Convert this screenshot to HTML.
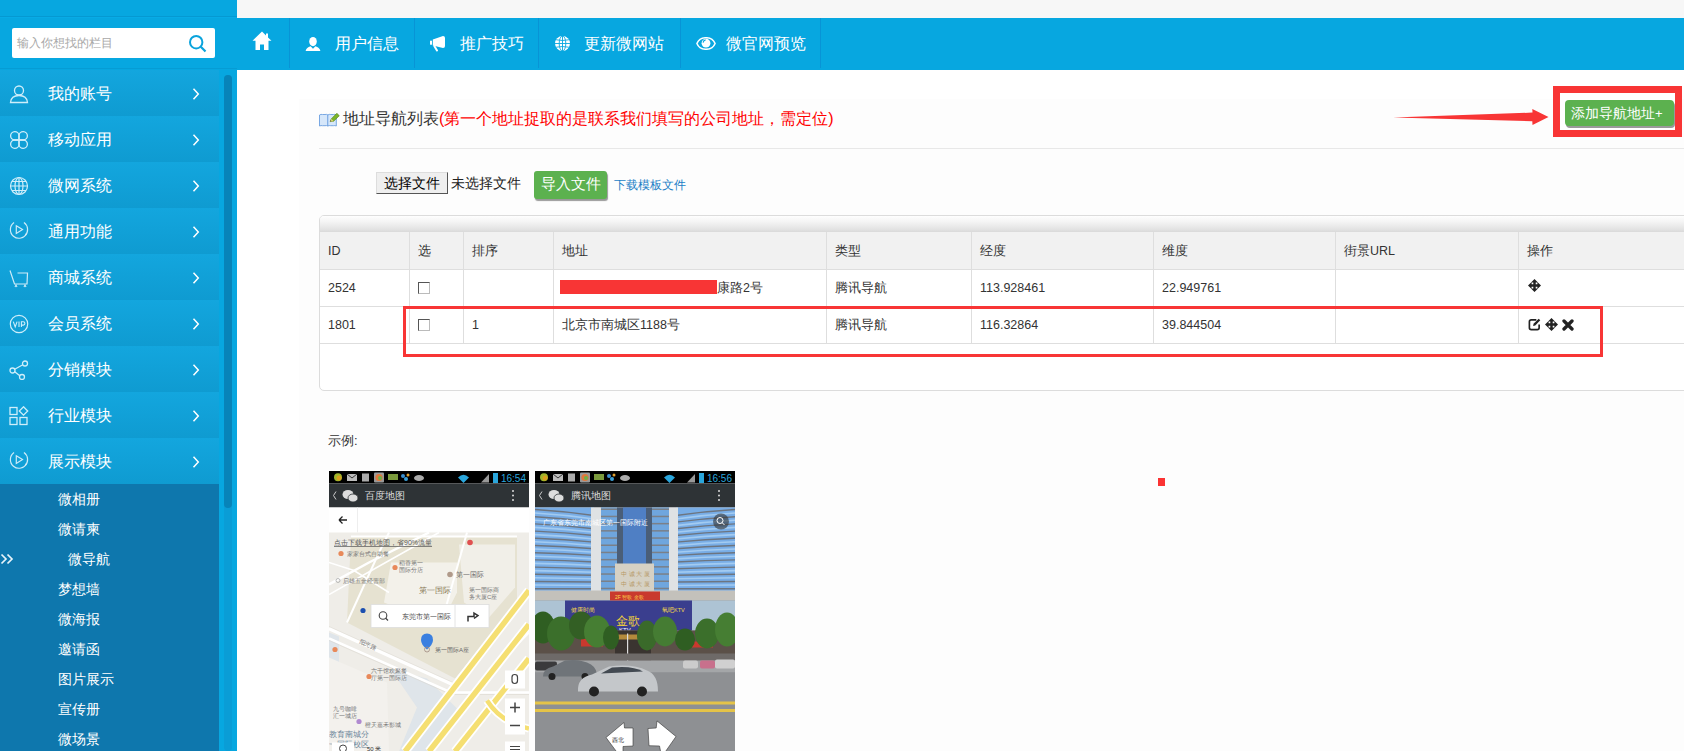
<!DOCTYPE html>
<html><head><meta charset="utf-8">
<style>
*{margin:0;padding:0;box-sizing:border-box}
html,body{width:1684px;height:751px;overflow:hidden;background:#fff;font-family:"Liberation Sans",sans-serif;color:#333}
.a{position:absolute}
#side{left:0;top:0;width:237px;height:751px;background:#07a7e0;overflow:hidden}
.mi{position:absolute;left:0;width:219px;height:46px;background:linear-gradient(#13a6de,#0f9bd1);color:#fff;font-size:16px}
.mi .t{position:absolute;left:48px;top:14px;font-weight:300;line-height:20px;white-space:nowrap}
.mi .ar{position:absolute;left:192px;top:18px;line-height:0}
.mi .ic{position:absolute;left:9px;top:14px}
#sub{left:0;top:484px;width:219px;height:267px;background:#0e77ad}
.si{position:absolute;left:58px;color:#fff;font-size:14px;line-height:18px;white-space:nowrap}
#nav{left:237px;top:18px;width:1447px;height:52px;background:#07a7e0}
.nsep{position:absolute;top:0;width:1px;height:50px;background:#0894d6}
.nt{position:absolute;top:16px;color:#fff;font-size:16px;line-height:20px;white-space:nowrap}
.tc{font-size:12.5px;line-height:15px;color:#333;white-space:nowrap}
</style></head><body>
<!-- sidebar -->
<div id="side" class="a">
  <div class="a" style="left:0;top:16px;width:237px;height:1px;background:#0599d2"></div><div class="a" style="left:0;top:17px;width:237px;height:1px;background:#08abe6"></div>
  <div class="a" style="left:0;top:68px;width:237px;height:1px;background:#069cd4"></div>
  <div class="a" style="left:12px;top:28px;width:203px;height:30px;background:#fff;border-radius:2px"></div>
  <div class="a" style="left:17px;top:35px;font-size:12px;line-height:16px;color:#a8a8a8;white-space:nowrap">输入你想找的栏目</div>
  <div class="a" style="left:188px;top:34px;line-height:0"><svg width="20" height="20" viewBox="0 0 20 20" fill="none" stroke="#0aa3dc" stroke-width="2"><circle cx="8.2" cy="8.2" r="6.2"/><path d="M12.8 12.8 L17.5 17.5" stroke-width="2.2"/></svg></div>
  <div class="mi" style="top:70px"><div class="ic"><svg width="20" height="20" viewBox="0 0 20 20" fill="none" stroke="#cfeefa" stroke-width="1.3"><circle cx="10" cy="6.5" r="4.5"/><path d="M1.5 18.5 C2 13 6 11.5 10 11.5 C14 11.5 18 13 18.5 18.5 Z"/></svg></div><div class="t">我的账号</div><div class="ar"><svg width="8" height="12" viewBox="0 0 8 12"><path d="M1.5 0.8 L6.3 6 L1.5 11.2" fill="none" stroke="#fff" stroke-width="1.5"/></svg></div></div>
  <div class="mi" style="top:116px"><div class="ic"><svg width="20" height="20" viewBox="0 0 20 20" fill="none" stroke="#cfeefa" stroke-width="1.3"><path d="M10 10 H5.5 A4.2 4.2 0 1 1 10 5.5 Z"/><path d="M10 10 V5.5 A4.2 4.2 0 1 1 14.5 10 Z"/><path d="M10 10 H14.5 A4.2 4.2 0 1 1 10 14.5 Z"/><path d="M10 10 V14.5 A4.2 4.2 0 1 1 5.5 10 Z"/></svg></div><div class="t">移动应用</div><div class="ar"><svg width="8" height="12" viewBox="0 0 8 12"><path d="M1.5 0.8 L6.3 6 L1.5 11.2" fill="none" stroke="#fff" stroke-width="1.5"/></svg></div></div>
  <div class="mi" style="top:162px"><div class="ic"><svg width="20" height="20" viewBox="0 0 20 20" fill="none" stroke="#cfeefa" stroke-width="1.2"><circle cx="10" cy="10" r="8.5"/><ellipse cx="10" cy="10" rx="4" ry="8.5"/><path d="M10 1.5V18.5M1.5 10H18.5M3 5.5H17M3 14.5H17"/></svg></div><div class="t">微网系统</div><div class="ar"><svg width="8" height="12" viewBox="0 0 8 12"><path d="M1.5 0.8 L6.3 6 L1.5 11.2" fill="none" stroke="#fff" stroke-width="1.5"/></svg></div></div>
  <div class="mi" style="top:208px"><div class="ic"><svg width="20" height="20" viewBox="0 0 20 20" fill="none" stroke="#cdebf8" stroke-width="1.2"><path d="M5.07 0.56 A8.6 8.6 0 1 0 17.79 11.23"/><path d="M16.08 13.68 A8.6 8.6 0 0 0 14.93 0.56"/><path d="M7.3 3.8 L13.5 7.6 L7.3 11.4 Z"/></svg></div><div class="t">通用功能</div><div class="ar"><svg width="8" height="12" viewBox="0 0 8 12"><path d="M1.5 0.8 L6.3 6 L1.5 11.2" fill="none" stroke="#fff" stroke-width="1.5"/></svg></div></div>
  <div class="mi" style="top:254px"><div class="ic"><svg width="20" height="20" viewBox="0 0 20 20" fill="none" stroke="#cdebf8" stroke-width="1.2"><path d="M1 2.5 L5.5 16 H18 L18.5 5 H8.5"/><path d="M6 19 L7 17 L8 19 M15 19 L16 17 L17 19" stroke-width="1.1"/></svg></div><div class="t">商城系统</div><div class="ar"><svg width="8" height="12" viewBox="0 0 8 12"><path d="M1.5 0.8 L6.3 6 L1.5 11.2" fill="none" stroke="#fff" stroke-width="1.5"/></svg></div></div>
  <div class="mi" style="top:300px"><div class="ic"><svg width="20" height="20" viewBox="0 0 20 20" fill="none" stroke="#cfeefa" stroke-width="1.2"><circle cx="10" cy="10" r="8.7"/><path d="M4.3 7.6 L6.2 12.9 L8.1 7.6 M10 7.6 V12.9 M12.4 12.9 V7.8 H14.2 Q15.9 7.8 15.9 9.5 Q15.9 11.1 14.2 11.1 H12.4" stroke-width="1.1"/></svg></div><div class="t">会员系统</div><div class="ar"><svg width="8" height="12" viewBox="0 0 8 12"><path d="M1.5 0.8 L6.3 6 L1.5 11.2" fill="none" stroke="#fff" stroke-width="1.5"/></svg></div></div>
  <div class="mi" style="top:346px"><div class="ic"><svg width="20" height="20" viewBox="0 0 20 20" fill="none" stroke="#cfeefa" stroke-width="1.3"><circle cx="16" cy="3.5" r="2.5"/><circle cx="3.5" cy="10.5" r="2.5"/><circle cx="13" cy="17" r="2.5"/><path d="M5.7 9.3 L13.8 4.7 M5.7 11.7 L10.8 15.8"/></svg></div><div class="t">分销模块</div><div class="ar"><svg width="8" height="12" viewBox="0 0 8 12"><path d="M1.5 0.8 L6.3 6 L1.5 11.2" fill="none" stroke="#fff" stroke-width="1.5"/></svg></div></div>
  <div class="mi" style="top:392px"><div class="ic"><svg width="20" height="20" viewBox="0 0 20 20" fill="none" stroke="#cfeefa" stroke-width="1.3"><rect x="1" y="1.5" width="7" height="7"/><rect x="1" y="11.5" width="7" height="7"/><rect x="11" y="11.5" width="7" height="7"/><path d="M14.5 0.8 L18.7 5 L14.5 9.2 L10.3 5 Z"/></svg></div><div class="t">行业模块</div><div class="ar"><svg width="8" height="12" viewBox="0 0 8 12"><path d="M1.5 0.8 L6.3 6 L1.5 11.2" fill="none" stroke="#fff" stroke-width="1.5"/></svg></div></div>
  <div class="mi" style="top:438px"><div class="ic"><svg width="20" height="20" viewBox="0 0 20 20" fill="none" stroke="#cdebf8" stroke-width="1.2"><path d="M5.07 0.56 A8.6 8.6 0 1 0 17.79 11.23"/><path d="M16.08 13.68 A8.6 8.6 0 0 0 14.93 0.56"/><path d="M7.3 3.8 L13.5 7.6 L7.3 11.4 Z"/></svg></div><div class="t">展示模块</div><div class="ar"><svg width="8" height="12" viewBox="0 0 8 12"><path d="M1.5 0.8 L6.3 6 L1.5 11.2" fill="none" stroke="#fff" stroke-width="1.5"/></svg></div></div>
  <div id="sub" class="a"></div>
  <div class="si" style="left:58px;top:490px">微相册</div>
  <div class="si" style="left:58px;top:520px">微请柬</div>
  <div class="si" style="left:68px;top:550px">微导航</div>
  <div class="si" style="left:58px;top:580px">梦想墙</div>
  <div class="si" style="left:58px;top:610px">微海报</div>
  <div class="si" style="left:58px;top:640px">邀请函</div>
  <div class="si" style="left:58px;top:670px">图片展示</div>
  <div class="si" style="left:58px;top:700px">宣传册</div>
  <div class="si" style="left:58px;top:730px">微场景</div>
  <div class="a" style="left:0;top:553px;line-height:0"><svg width="15" height="12" viewBox="0 0 15 12" fill="none" stroke="#e8f4fa" stroke-width="1.7"><path d="M1.5 1.5 L6 6 L1.5 10.5 M7.5 1.5 L12 6 L7.5 10.5"/></svg></div>
  <div class="a" style="left:224px;top:75px;width:8px;height:676px;background:#0a9dd6;border-radius:4px"></div>
  <div class="a" style="left:224px;top:75px;width:8px;height:433px;background:#0784b9;border-radius:4px"></div>
</div>
<!-- top strip -->
<div class="a" style="left:237px;top:0;width:1447px;height:18px;background:#f7f7f7"></div>
<!-- nav -->
<div id="nav" class="a">
  <div class="nsep" style="left:52px"></div>
  <div class="nsep" style="left:177px"></div>
  <div class="nsep" style="left:301px"></div>
  <div class="nsep" style="left:443px"></div>
  <div class="nsep" style="left:583px"></div>
  <div class="a" style="left:15px;top:13px;line-height:0"><svg width="20" height="20" viewBox="0 0 20 20"><path d="M10 0.5 L0.5 9.8 H3.5 V19 H8 V13.5 H12 V19 H16.5 V9.8 H19.5 L16 6.4 V2.5 H14 V4.5 Z" fill="#fff"/></svg></div>
  <div class="a" style="left:68px;top:19px;line-height:0"><svg width="16" height="15" viewBox="0 0 16 15"><ellipse cx="8" cy="4.6" rx="3.8" ry="4.6" fill="#fff"/><path d="M0.6 14 Q1.5 10.3 5.6 9.2 L8 11.8 L10.4 9.2 Q14.5 10.3 15.4 14 Z" fill="#fff"/></svg></div>
  <div class="a" style="left:193px;top:18px;line-height:0"><svg width="16" height="16" viewBox="0 0 16 16"><rect x="0" y="4.7" width="2" height="4" fill="#fff"/><path d="M2.8 3.5 L13 0 Q15 0 15 2 V10 Q15 12 13 12 L2.8 9.5 Z" fill="#fff"/><path d="M4.3 10 L7 14.5" stroke="#fff" stroke-width="2" stroke-linecap="round"/></svg></div>
  <div class="a" style="left:318px;top:18px;line-height:0"><svg width="15" height="15" viewBox="0 0 15 15"><circle cx="7.5" cy="7.5" r="7.5" fill="#fff"/><g stroke="#07a7e0" stroke-width="0.9" fill="none"><ellipse cx="7.5" cy="7.5" rx="3.3" ry="7.5"/><path d="M7.5 0V15M0 7.5H15M1.2 3.8 Q7.5 5.2 13.8 3.8 M1.2 11.2 Q7.5 9.8 13.8 11.2"/></g></svg></div>
  <div class="a" style="left:459px;top:19px;line-height:0"><svg width="20" height="13" viewBox="0 0 20 13"><path d="M0.9 6.5 C4 -1.2 16 -1.2 19.1 6.5 C16 14.2 4 14.2 0.9 6.5 Z" fill="none" stroke="#fff" stroke-width="1.5"/><circle cx="10" cy="6.2" r="4.4" fill="#fff"/><path d="M7.1 5.6 Q7.4 3.3 9.6 2.9" stroke="#07a7e0" stroke-width="1.1" fill="none"/></svg></div>
  <div class="nt" style="left:98px">用户信息</div>
  <div class="nt" style="left:223px">推广技巧</div>
  <div class="nt" style="left:347px">更新微网站</div>
  <div class="nt" style="left:489px">微官网预览</div>
</div>
<!-- content -->
<div class="a" style="left:299px;top:99px;width:1385px;height:652px;background:#fdfdfd"></div>
<div class="a" style="left:319px;top:113px;line-height:0"><svg width="21" height="14" viewBox="0 0 21 14"><path d="M0.5 2 Q2 1 3.5 1.5 H6 Q7.5 1 9 2 V13 Q7.5 12.3 6 12.7 H3.5 Q2 12.3 0.5 13 Z" fill="#d6e7fa" stroke="#6c9fe0" stroke-width="0.9"/><path d="M8.8 2 Q10.3 1 11.8 1.5 H14.3 Q15.8 1 17.3 2 V13 Q15.8 12.3 14.3 12.7 H11.8 Q10.3 12.3 8.8 13 Z" fill="#d6e7fa" stroke="#6c9fe0" stroke-width="0.9"/><path d="M11.2 8.6 L12.2 6 L17.8 0.3 L20.3 2.7 L14.6 8.3 Z" fill="#7db52a" stroke="#4f7d17" stroke-width="0.6"/><path d="M11.2 8.6 L12.2 6 L14.6 8.3 Z" fill="#f2e080"/><path d="M11.2 8.6 L11.7 7.3 L12.6 8.1 Z" fill="#222"/></svg></div>
<div class="a" style="left:343px;top:109px;font-size:16px;line-height:20px;color:#333;white-space:nowrap">地址导航列表<span style="color:#f00">(第一个地址捉取的是联系我们填写的公司地址，需定位)</span></div>
<div class="a" style="left:319px;top:148px;width:1365px;height:1px;background:#e8e8e8"></div>
<div class="a" style="left:1393px;top:95px"><svg width="160" height="35" viewBox="1393 95 160 35"><path d="M1393 117.4 L1532.5 112.6 L1532.3 108.9 L1548.5 116.9 L1532.5 124.9 L1532.3 121.2 Z" fill="#f83535"/></svg></div>
<div class="a" style="left:1553px;top:86px;width:129px;height:51px;border:7px solid #f83535;background:#fff"></div>
<div class="a" style="left:1565px;top:100px;width:109px;height:26px;background:#5cb14f;border-radius:4px;box-shadow:1px 2px 0 #999;color:#fff;font-size:14px;line-height:26px;padding-left:6px;white-space:nowrap">添加导航地址<span style="font-size:13px">+</span></div>
<!-- file row -->
<div class="a" style="left:376px;top:172px;width:72px;height:22px;background:#efefef;border:1px solid #aaa;border-right-color:#555;border-bottom-color:#555;border-top-color:#ddd;border-left-color:#ddd;font-size:14px;line-height:20px;color:#000;text-align:center;white-space:nowrap">选择文件</div>
<div class="a" style="left:451px;top:173px;font-size:14px;line-height:20px;color:#222;white-space:nowrap">未选择文件</div>
<div class="a" style="left:534px;top:171px;width:73px;height:28px;background:#5cb14f;border-radius:3px;box-shadow:1px 2px 1px #999;color:#fff;font-size:15px;line-height:26px;text-align:center;white-space:nowrap">导入文件</div>
<div class="a" style="left:614px;top:177px;font-size:12px;line-height:16px;color:#1c7fc6;white-space:nowrap">下载模板文件</div>
<!-- table -->
<div class="a" style="left:319px;top:215px;width:1400px;height:176px;border:1px solid #dcdcdc;border-radius:5px;background:#fff;overflow:hidden">
  <div class="a" style="left:0;top:0;width:1400px;height:17px;background:linear-gradient(#fefefe 0%,#f4f4f4 35%,#e2e2e2 80%,#d6d6d6 100%)"></div>
  <div class="a" style="left:0;top:16px;width:1400px;height:37px;background:#f1f1f1"></div>
  <div class="a" style="left:0;top:53px;width:1400px;height:1px;background:#dedede"></div>
  <div class="a" style="left:0;top:90px;width:1400px;height:1px;background:#dedede"></div>
  <div class="a" style="left:0;top:127px;width:1400px;height:1px;background:#dedede"></div>
  <div class="a" style="left:89px;top:16px;width:1px;height:111px;background:#dedede"></div>
  <div class="a" style="left:143px;top:16px;width:1px;height:111px;background:#dedede"></div>
  <div class="a" style="left:233px;top:16px;width:1px;height:111px;background:#dedede"></div>
  <div class="a" style="left:506px;top:16px;width:1px;height:111px;background:#dedede"></div>
  <div class="a" style="left:651px;top:16px;width:1px;height:111px;background:#dedede"></div>
  <div class="a" style="left:833px;top:16px;width:1px;height:111px;background:#dedede"></div>
  <div class="a" style="left:1015px;top:16px;width:1px;height:111px;background:#dedede"></div>
  <div class="a" style="left:1198px;top:16px;width:1px;height:111px;background:#dedede"></div>
</div>
<div class="a tc" style="left:328px;top:244px;">ID</div>
<div class="a tc" style="left:418px;top:244px;">选</div>
<div class="a tc" style="left:472px;top:244px;">排序</div>
<div class="a tc" style="left:562px;top:244px;">地址</div>
<div class="a tc" style="left:835px;top:244px;">类型</div>
<div class="a tc" style="left:980px;top:244px;">经度</div>
<div class="a tc" style="left:1162px;top:244px;">维度</div>
<div class="a tc" style="left:1344px;top:244px;">街景URL</div>
<div class="a tc" style="left:1527px;top:244px;">操作</div>
<div class="a tc" style="left:328px;top:281px;">2524</div>
<div class="a tc" style="left:835px;top:281px;">腾讯导航</div>
<div class="a tc" style="left:980px;top:281px;">113.928461</div>
<div class="a tc" style="left:1162px;top:281px;">22.949761</div>
<div class="a tc" style="left:328px;top:318px;">1801</div>
<div class="a tc" style="left:472px;top:318px;">1</div>
<div class="a tc" style="left:562px;top:318px;">北京市南城区1188号</div>
<div class="a tc" style="left:835px;top:318px;">腾讯导航</div>
<div class="a tc" style="left:980px;top:318px;">116.32864</div>
<div class="a tc" style="left:1162px;top:318px;">39.844504</div>
<div class="a" style="left:418px;top:282px;width:12px;height:12px;border:1px solid #bbb;border-top-color:#555;border-left-color:#555;background:#fff"></div>
<div class="a" style="left:418px;top:319px;width:12px;height:12px;border:1px solid #bbb;border-top-color:#555;border-left-color:#555;background:#fff"></div>
<div class="a" style="left:560px;top:280px;width:157px;height:14px;background:#f83535"></div>
<div class="a tc" style="left:717px;top:281px;">康路2号</div>
<div class="a" style="left:1528px;top:279px;line-height:0"><svg width="13" height="13" viewBox="0 0 13 13"><path d="M6.5 0 L10 3.6 H7.7 V5.3 H9.4 V3 L13 6.5 L9.4 10 V7.7 H7.7 V9.4 H10 L6.5 13 L3 9.4 H5.3 V7.7 H3.6 V10 L0 6.5 L3.6 3 V5.3 H5.3 V3.6 H3 Z" fill="#222"/></svg></div>
<div class="a" style="left:1528px;top:318px;line-height:0"><svg width="13" height="13" viewBox="0 0 14 14"><path d="M9 2 H3.5 Q1.5 2 1.5 4 V10.5 Q1.5 12.5 3.5 12.5 H10 Q12 12.5 12 10.5 V7" fill="none" stroke="#222" stroke-width="1.8"/><path d="M5.5 8.5 L6 6.2 L11.5 0.8 L13.2 2.5 L7.8 8 Z" fill="#222"/></svg></div>
<div class="a" style="left:1545px;top:318px;line-height:0"><svg width="13" height="13" viewBox="0 0 13 13"><path d="M6.5 0 L10 3.6 H7.7 V5.3 H9.4 V3 L13 6.5 L9.4 10 V7.7 H7.7 V9.4 H10 L6.5 13 L3 9.4 H5.3 V7.7 H3.6 V10 L0 6.5 L3.6 3 V5.3 H5.3 V3.6 H3 Z" fill="#222"/></svg></div>
<div class="a" style="left:1562px;top:319px;line-height:0"><svg width="12" height="12" viewBox="0 0 12 12"><path d="M2 2 L10 10 M10 2 L2 10" stroke="#222" stroke-width="3.3" stroke-linecap="round"/></svg></div>
<div class="a" style="left:403px;top:306px;width:1200px;height:51px;border:3px solid #f83535"></div>
<div class="a" style="left:328px;top:433px;font-size:13px;line-height:16px;color:#333">示例:</div>
<div class="a" style="left:1158px;top:478px;width:7px;height:8px;background:#fb3333"></div>
<div class="a" style="left:329px;top:471px;width:200px;height:280px;overflow:hidden"><svg width="200" height="280" viewBox="0 0 200 280" style="display:block"><rect x="0" y="0" width="200" height="12.5" fill="#000"/>
<circle cx="9" cy="6.3" r="4" fill="#9fb52a"/><circle cx="10" cy="7" r="2.5" fill="#d8a020"/>
<rect x="18" y="3" width="10" height="7" fill="#bbb"/><path d="M18 3 L23 7 L28 3" stroke="#333" stroke-width="1" fill="none"/>
<rect x="33" y="2.5" width="7" height="8" fill="#aaa"/>
<rect x="45" y="1.5" width="10" height="10" rx="1" fill="#999"/><circle cx="50" cy="6.5" r="3.6" fill="#e0783c"/><circle cx="51" cy="7" r="2" fill="#6bb24a"/>
<rect x="59" y="3" width="10" height="6" fill="#7b9a3c"/>
<circle cx="74" cy="5" r="2" fill="#3a8fd0"/><circle cx="77" cy="8" r="2" fill="#3aa0d8"/><circle cx="79" cy="4" r="1.5" fill="#e0a030"/>
<ellipse cx="90" cy="7" rx="5" ry="3" fill="#aaa"/>
<path d="M129 6.5 L134.5 12 L140 6.5 Q134.5 1 129 6.5Z" fill="#2aa6dc"/>
<path d="M152 11.5 L160 3 V11.5 Z" fill="#999"/>
<rect x="164" y="2" width="5" height="10" fill="#2aa6dc"/>
<text x="197" y="10.5" font-size="10" font-family="Liberation Sans" fill="#2aa6dc" text-anchor="end">16:54</text>
<rect x="0" y="12.5" width="200" height="24" fill="#2e3336"/>
<path d="M7 20.5 L4.5 24.5 L7 28.5" stroke="#ccc" stroke-width="1" fill="none"/>
<ellipse cx="19" cy="23.5" rx="5.5" ry="4.5" fill="#ddd"/><ellipse cx="24" cy="27" rx="5" ry="4" fill="#ddd" stroke="#2e3336" stroke-width="0.8"/>
<text x="36" y="28" font-size="9.5" fill="#ddd">百度地图</text>
<circle cx="184" cy="20" r="1" fill="#ddd"/><circle cx="184" cy="24.5" r="1" fill="#ddd"/><circle cx="184" cy="29" r="1" fill="#ddd"/>

<rect x="0" y="36.5" width="200" height="25" fill="#fff"/>
<line x1="28.5" y1="36.5" x2="28.5" y2="61.5" stroke="#eee"/>
<path d="M10 49 H18 M10 49 L13.5 45.5 M10 49 L13.5 52.5" stroke="#222" stroke-width="1.3" fill="none"/>
<g transform="translate(0,61.5)">
<rect x="0" y="0" width="200" height="219" fill="#efede8"/>
<path d="M22 4 L188 4 L188 70 L126 146 L18 90 Z" fill="#e6e2d1"/>
<path d="M62 30 L128 30 L128 60 L112 92 L55 70 Z" fill="#f3f1ea"/>
<path d="M130 12 L186 12 L186 55 L160 85 L135 70 Z" fill="#f1efe8"/>
<path d="M0 100 L10 104 L10 200 L0 200 Z" fill="#dfe5ea"/>
<path d="M62 137 L98 146 L128 176 L102 219 L70 219 L88 175 Z" fill="#dfe5ea"/>
<path d="M0 125 L58 150 L60 219 L0 219 Z" fill="#f3f1ed"/>
<g stroke="#fff" fill="none">
<path d="M0 96 L124 152 L195 62" stroke-width="3.5"/>
<path d="M0 106 L122 160 L200 160" stroke-width="2.5"/>
<path d="M0 52 L40 30 L100 0" stroke-width="2.5"/>
<path d="M0 62 L46 36 L110 0" stroke-width="1.5"/>
<path d="M18 90 L50 20 L60 0" stroke-width="2"/>
<path d="M138 0 L112 92" stroke-width="2"/>
<path d="M0 30 L25 38 L60 60" stroke-width="1.5"/>
<path d="M22 4 H188" stroke-width="2"/>
<path d="M150 150 L200 100" stroke-width="2"/>
</g>
<g stroke="#d8d5cc" stroke-width="0.5" fill="none">
<path d="M0 94 L124 150 L195 60"/>
<path d="M0 108 L122 162 L200 162"/>
</g>
<path d="M76 219 L200 58" stroke="#fff" stroke-width="9" fill="none"/>
<path d="M76 219 L200 58" stroke="#f5df72" stroke-width="5.5" fill="none"/>
<path d="M100 219 L200 92" stroke="#fff" stroke-width="9" fill="none"/>
<path d="M100 219 L200 92" stroke="#f5df72" stroke-width="5.5" fill="none"/>
<path d="M126 219 L200 126" stroke="#fff" stroke-width="9" fill="none"/>
<path d="M126 219 L200 126" stroke="#f5df72" stroke-width="5.5" fill="none"/>
<path d="M158 168 Q172 190 200 196" stroke="#fff" stroke-width="8" fill="none"/>
<path d="M158 168 Q172 190 200 196" stroke="#f5df72" stroke-width="4.5" fill="none"/>
<text x="5" y="12.5" font-size="7" fill="#555" text-decoration="underline">点击下载手机地图，省90%流量</text>
<text x="18" y="23" font-size="6" fill="#777">家家台式自助餐</text>
<text x="70" y="32" font-size="6" fill="#777">稻香第一</text><text x="70" y="39" font-size="6" fill="#777">国际分店</text>
<text x="14" y="50" font-size="6" fill="#777">启雄五金经营部</text>
<text x="127" y="44" font-size="7" fill="#666">第一国际</text>
<text x="90" y="60" font-size="8" fill="#8a7c5a">第一国际</text>
<text x="140" y="59" font-size="6" fill="#777">第一国际商</text><text x="140" y="66" font-size="6" fill="#777">务大厦C座</text>
<text x="132" y="77" font-size="6" fill="#777">万店通</text>
<text x="30" y="110" font-size="6" fill="#777" transform="rotate(25 30 110)">阳光路</text>
<text x="42" y="140" font-size="6" fill="#777">六千馆欢聚餐</text><text x="42" y="147" font-size="6" fill="#777">厅第一国际店</text>
<text x="4" y="178" font-size="6" fill="#777">九号咖啡</text><text x="4" y="185" font-size="6" fill="#777">汇一城店</text>
<text x="36" y="194" font-size="6" fill="#777">橙天嘉禾影城</text>
<text x="0" y="204" font-size="8" fill="#6a8499">教育南城分</text><text x="0" y="214" font-size="8" fill="#6a8499">一国际校区</text>
<circle cx="12" cy="21" r="2.6" fill="#e8895a"/><circle cx="66" cy="35" r="2.6" fill="#e8895a"/>
<circle cx="141" cy="10" r="2.8" fill="#e05050"/><circle cx="121" cy="42" r="2.8" fill="#b09a8a"/>
<circle cx="9" cy="48" r="2" fill="none" stroke="#aaa" stroke-width="0.8"/>
<circle cx="34" cy="78" r="2.6" fill="#1b4fb0"/>
<circle cx="6" cy="117" r="2.6" fill="#e8895a"/><circle cx="40" cy="144" r="2.6" fill="#e8895a"/>
<circle cx="30" cy="189" r="2.6" fill="#b08ad0"/>
<rect x="42" y="72" width="118" height="23" fill="#fff" stroke="#ddd" stroke-width="0.8"/>
<line x1="126" y1="72" x2="126" y2="95" stroke="#e4e4e4"/>
<circle cx="54" cy="83" r="3.8" stroke="#444" stroke-width="1.1" fill="none"/><path d="M56.5 85.5 L59 88" stroke="#444" stroke-width="1.2"/>
<text x="73" y="86" font-size="7" fill="#444">东莞市第一国际</text>
<path d="M139 89 V84 H145 V80.5 L149 83 L145 86" stroke="#333" stroke-width="1.5" fill="none"/>
<path d="M98 101 Q92 101 92 107.5 Q92 112 98 117 Q104 112 104 107.5 Q104 101 98 101 Z" fill="#3a7fe0"/>
<circle cx="98" cy="117" r="2.5" fill="none" stroke="#a08a80" stroke-width="0.8"/>
<text x="106" y="119" font-size="6" fill="#666">第一国际A座</text>
<rect x="176" y="138" width="20" height="18" fill="#fff"/><rect x="183" y="142" width="5.5" height="9" rx="2.7" stroke="#444" stroke-width="1.2" fill="none"/>
<rect x="176" y="166" width="20" height="36" fill="#fff"/><path d="M181 175 H191 M186 170 V180 M181 193 H191" stroke="#444" stroke-width="1.5"/>
<rect x="176" y="209" width="20" height="12" fill="#fff"/><path d="M181 214 H191 M181 217 H191" stroke="#444" stroke-width="1"/>
<rect x="3" y="210" width="22" height="12" fill="#fff"/><circle cx="14" cy="216" r="3.5" stroke="#444" fill="none"/>
<text x="38" y="218" font-size="6" fill="#333">50 米</text>
</g>
</svg></div>
<div class="a" style="left:535px;top:471px;width:200px;height:280px;overflow:hidden"><svg width="200" height="280" viewBox="0 0 200 280" style="display:block"><rect x="0" y="0" width="200" height="12.5" fill="#000"/>
<circle cx="9" cy="6.3" r="4" fill="#9fb52a"/><circle cx="10" cy="7" r="2.5" fill="#d8a020"/>
<rect x="18" y="3" width="10" height="7" fill="#bbb"/><path d="M18 3 L23 7 L28 3" stroke="#333" stroke-width="1" fill="none"/>
<rect x="33" y="2.5" width="7" height="8" fill="#aaa"/>
<rect x="45" y="1.5" width="10" height="10" rx="1" fill="#999"/><circle cx="50" cy="6.5" r="3.6" fill="#e0783c"/><circle cx="51" cy="7" r="2" fill="#6bb24a"/>
<rect x="59" y="3" width="10" height="6" fill="#7b9a3c"/>
<circle cx="74" cy="5" r="2" fill="#3a8fd0"/><circle cx="77" cy="8" r="2" fill="#3aa0d8"/><circle cx="79" cy="4" r="1.5" fill="#e0a030"/>
<ellipse cx="90" cy="7" rx="5" ry="3" fill="#aaa"/>
<path d="M129 6.5 L134.5 12 L140 6.5 Q134.5 1 129 6.5Z" fill="#2aa6dc"/>
<path d="M152 11.5 L160 3 V11.5 Z" fill="#999"/>
<rect x="164" y="2" width="5" height="10" fill="#2aa6dc"/>
<text x="197" y="10.5" font-size="10" font-family="Liberation Sans" fill="#2aa6dc" text-anchor="end">16:56</text>
<rect x="0" y="12.5" width="200" height="24" fill="#2e3336"/>
<path d="M7 20.5 L4.5 24.5 L7 28.5" stroke="#ccc" stroke-width="1" fill="none"/>
<ellipse cx="19" cy="23.5" rx="5.5" ry="4.5" fill="#ddd"/><ellipse cx="24" cy="27" rx="5" ry="4" fill="#ddd" stroke="#2e3336" stroke-width="0.8"/>
<text x="36" y="28" font-size="9.5" fill="#ddd">腾讯地图</text>
<circle cx="184" cy="20" r="1" fill="#ddd"/><circle cx="184" cy="24.5" r="1" fill="#ddd"/><circle cx="184" cy="29" r="1" fill="#ddd"/>

<g transform="translate(0,36.5)">
<rect x="0" y="0" width="200" height="244" fill="#8d8f92"/>
<rect x="0" y="0" width="59" height="84" fill="#78ade6"/><path d="M0 2.0 Q30 3.8 59 8.0" stroke="#6d7580" stroke-width="1.4" fill="none"/><path d="M0 5.5 Q30 7.3 59 11.5" stroke="#a3cbf1" stroke-width="1.6" fill="none"/><path d="M0 9.2 Q30 10.8 59 14.6" stroke="#6d7580" stroke-width="1.4" fill="none"/><path d="M0 12.7 Q30 14.3 59 18.1" stroke="#a3cbf1" stroke-width="1.6" fill="none"/><path d="M0 16.4 Q30 17.9 59 21.3" stroke="#6d7580" stroke-width="1.4" fill="none"/><path d="M0 19.9 Q30 21.4 59 24.8" stroke="#a3cbf1" stroke-width="1.6" fill="none"/><path d="M0 23.6 Q30 24.9 59 28.0" stroke="#6d7580" stroke-width="1.4" fill="none"/><path d="M0 27.1 Q30 28.4 59 31.5" stroke="#a3cbf1" stroke-width="1.6" fill="none"/><path d="M0 30.8 Q30 31.9 59 34.6" stroke="#6d7580" stroke-width="1.4" fill="none"/><path d="M0 34.3 Q30 35.4 59 38.1" stroke="#a3cbf1" stroke-width="1.6" fill="none"/><path d="M0 38.0 Q30 39.0 59 41.2" stroke="#6d7580" stroke-width="1.4" fill="none"/><path d="M0 41.5 Q30 42.5 59 44.8" stroke="#a3cbf1" stroke-width="1.6" fill="none"/><path d="M0 45.2 Q30 46.0 59 47.9" stroke="#6d7580" stroke-width="1.4" fill="none"/><path d="M0 48.7 Q30 49.5 59 51.4" stroke="#a3cbf1" stroke-width="1.6" fill="none"/><path d="M0 52.4 Q30 53.0 59 54.5" stroke="#6d7580" stroke-width="1.4" fill="none"/><path d="M0 55.9 Q30 56.5 59 58.0" stroke="#a3cbf1" stroke-width="1.6" fill="none"/><path d="M0 59.6 Q30 60.1 59 61.2" stroke="#6d7580" stroke-width="1.4" fill="none"/><path d="M0 63.1 Q30 63.6 59 64.7" stroke="#a3cbf1" stroke-width="1.6" fill="none"/><path d="M0 66.8 Q30 67.1 59 67.8" stroke="#6d7580" stroke-width="1.4" fill="none"/><path d="M0 70.3 Q30 70.6 59 71.3" stroke="#a3cbf1" stroke-width="1.6" fill="none"/><path d="M0 74.0 Q30 74.2 59 74.5" stroke="#6d7580" stroke-width="1.4" fill="none"/><path d="M0 77.5 Q30 77.7 59 78.0" stroke="#a3cbf1" stroke-width="1.6" fill="none"/><path d="M0 81.2 Q30 81.2 59 81.2" stroke="#6d7580" stroke-width="1.4" fill="none"/><path d="M0 84.7 Q30 84.7 59 84.7" stroke="#a3cbf1" stroke-width="1.6" fill="none"/><rect x="141" y="0" width="59" height="84" fill="#78ade6"/><path d="M141 8.0 Q170 3.8 200 2.0" stroke="#6d7580" stroke-width="1.4" fill="none"/><path d="M141 11.5 Q170 7.3 200 5.5" stroke="#a3cbf1" stroke-width="1.6" fill="none"/><path d="M141 14.6 Q170 10.8 200 9.2" stroke="#6d7580" stroke-width="1.4" fill="none"/><path d="M141 18.1 Q170 14.3 200 12.7" stroke="#a3cbf1" stroke-width="1.6" fill="none"/><path d="M141 21.3 Q170 17.9 200 16.4" stroke="#6d7580" stroke-width="1.4" fill="none"/><path d="M141 24.8 Q170 21.4 200 19.9" stroke="#a3cbf1" stroke-width="1.6" fill="none"/><path d="M141 28.0 Q170 24.9 200 23.6" stroke="#6d7580" stroke-width="1.4" fill="none"/><path d="M141 31.5 Q170 28.4 200 27.1" stroke="#a3cbf1" stroke-width="1.6" fill="none"/><path d="M141 34.6 Q170 31.9 200 30.8" stroke="#6d7580" stroke-width="1.4" fill="none"/><path d="M141 38.1 Q170 35.4 200 34.3" stroke="#a3cbf1" stroke-width="1.6" fill="none"/><path d="M141 41.2 Q170 39.0 200 38.0" stroke="#6d7580" stroke-width="1.4" fill="none"/><path d="M141 44.8 Q170 42.5 200 41.5" stroke="#a3cbf1" stroke-width="1.6" fill="none"/><path d="M141 47.9 Q170 46.0 200 45.2" stroke="#6d7580" stroke-width="1.4" fill="none"/><path d="M141 51.4 Q170 49.5 200 48.7" stroke="#a3cbf1" stroke-width="1.6" fill="none"/><path d="M141 54.5 Q170 53.0 200 52.4" stroke="#6d7580" stroke-width="1.4" fill="none"/><path d="M141 58.0 Q170 56.5 200 55.9" stroke="#a3cbf1" stroke-width="1.6" fill="none"/><path d="M141 61.2 Q170 60.1 200 59.6" stroke="#6d7580" stroke-width="1.4" fill="none"/><path d="M141 64.7 Q170 63.6 200 63.1" stroke="#a3cbf1" stroke-width="1.6" fill="none"/><path d="M141 67.8 Q170 67.1 200 66.8" stroke="#6d7580" stroke-width="1.4" fill="none"/><path d="M141 71.3 Q170 70.6 200 70.3" stroke="#a3cbf1" stroke-width="1.6" fill="none"/><path d="M141 74.5 Q170 74.2 200 74.0" stroke="#6d7580" stroke-width="1.4" fill="none"/><path d="M141 78.0 Q170 77.7 200 77.5" stroke="#a3cbf1" stroke-width="1.6" fill="none"/><path d="M141 81.2 Q170 81.2 200 81.2" stroke="#6d7580" stroke-width="1.4" fill="none"/><path d="M141 84.7 Q170 84.7 200 84.7" stroke="#a3cbf1" stroke-width="1.6" fill="none"/><rect x="56" y="0" width="10" height="84" fill="#dfe2e4"/><rect x="134" y="0" width="9" height="84" fill="#dfe2e4"/><rect x="66" y="0" width="16" height="84" fill="#6fa6de"/><rect x="117" y="0" width="17" height="84" fill="#6fa6de"/><rect x="66" y="1.0" width="16" height="1.5" fill="#7b8088"/><rect x="117" y="1.0" width="17" height="1.5" fill="#7b8088"/><rect x="66" y="8.2" width="16" height="1.5" fill="#7b8088"/><rect x="117" y="8.2" width="17" height="1.5" fill="#7b8088"/><rect x="66" y="15.4" width="16" height="1.5" fill="#7b8088"/><rect x="117" y="15.4" width="17" height="1.5" fill="#7b8088"/><rect x="66" y="22.6" width="16" height="1.5" fill="#7b8088"/><rect x="117" y="22.6" width="17" height="1.5" fill="#7b8088"/><rect x="66" y="29.8" width="16" height="1.5" fill="#7b8088"/><rect x="117" y="29.8" width="17" height="1.5" fill="#7b8088"/><rect x="66" y="37.0" width="16" height="1.5" fill="#7b8088"/><rect x="117" y="37.0" width="17" height="1.5" fill="#7b8088"/><rect x="66" y="44.2" width="16" height="1.5" fill="#7b8088"/><rect x="117" y="44.2" width="17" height="1.5" fill="#7b8088"/><rect x="66" y="51.4" width="16" height="1.5" fill="#7b8088"/><rect x="117" y="51.4" width="17" height="1.5" fill="#7b8088"/><rect x="66" y="58.6" width="16" height="1.5" fill="#7b8088"/><rect x="117" y="58.6" width="17" height="1.5" fill="#7b8088"/><rect x="66" y="65.8" width="16" height="1.5" fill="#7b8088"/><rect x="117" y="65.8" width="17" height="1.5" fill="#7b8088"/><rect x="66" y="73.0" width="16" height="1.5" fill="#7b8088"/><rect x="117" y="73.0" width="17" height="1.5" fill="#7b8088"/><rect x="66" y="80.2" width="16" height="1.5" fill="#7b8088"/><rect x="117" y="80.2" width="17" height="1.5" fill="#7b8088"/><rect x="82" y="0" width="35" height="57" fill="#4a5e78"/>
<rect x="88" y="0" width="23" height="57" fill="#4f7fc4"/>
<rect x="80" y="56" width="39" height="28" fill="#d6d1c4"/>
<text x="86" y="68" font-size="5.5" fill="#b89a68">中 诚 大 厦</text>
<text x="86" y="78" font-size="5.5" fill="#b89a68">中 诚 大 厦</text>
<rect x="0" y="83" width="200" height="10" fill="#c3c1bb"/>
<rect x="0" y="93" width="200" height="30" fill="#adc3d4"/>
<rect x="30" y="93" width="127" height="30" fill="#3a3e8e"/>
<rect x="75" y="84" width="50" height="9" fill="#c9392e"/>
<text x="80" y="91" font-size="5" fill="#ffd84a">2F 智歌 金歌</text>
<text x="36" y="104" font-size="5.5" fill="#f5d84a">健康时尚</text>
<text x="127" y="104" font-size="5.5" fill="#f5d84a">氧吧KTV</text>
<text x="81" y="117" font-size="12" fill="#f2d23a">金歌</text>
<text x="84" y="124" font-size="6" fill="#fff">KTV</text>
<rect x="0" y="123" width="200" height="30" fill="#5b5048"/>
<rect x="80" y="123" width="36" height="30" fill="#3a3430"/>
<rect x="80" y="127" width="36" height="5" fill="#b38a3c"/>
<rect x="46" y="131" width="22" height="8" fill="#c9392e"/>
<rect x="148" y="134" width="30" height="6" fill="#c9392e"/>
<ellipse cx="8" cy="120" rx="12" ry="16" fill="#2f5e22"/>
<ellipse cx="26" cy="126" rx="14" ry="17" fill="#3b6f2b"/>
<ellipse cx="46" cy="118" rx="12" ry="14" fill="#335f24"/>
<ellipse cx="62" cy="124" rx="13" ry="16" fill="#467e33"/>
<ellipse cx="76" cy="130" rx="8" ry="12" fill="#2f5e22"/>
<ellipse cx="112" cy="128" rx="10" ry="15" fill="#3a6a2a"/>
<ellipse cx="130" cy="124" rx="12" ry="15" fill="#457c33"/>
<ellipse cx="150" cy="132" rx="10" ry="11" fill="#2f5e22"/>
<ellipse cx="172" cy="126" rx="12" ry="15" fill="#3b6f2b"/>
<ellipse cx="192" cy="122" rx="12" ry="17" fill="#467e33"/>
<rect x="92" y="126" width="1.2" height="28" fill="#ddd"/>
<rect x="0" y="146" width="200" height="7" fill="#6e6a68"/>
<rect x="0" y="153" width="200" height="12" fill="#a4a6a8"/>
<rect x="0" y="165" width="200" height="79" fill="#8e9093"/>
<rect x="0" y="154" width="22" height="9" rx="2" fill="#3a3a3c"/>
<rect x="180" y="152" width="20" height="9" rx="2" fill="#d0d0d0"/>
<rect x="165" y="153" width="15" height="8" rx="2" fill="#c8708c"/>
<rect x="148" y="153" width="15" height="8" rx="2" fill="#ccc"/>
<path d="M8 169 Q8 161 18 159 L30 153 Q46 151 56 157 Q62 161 62 169 Z" fill="#6f7479"/>
<circle cx="17" cy="169" r="3.5" fill="#222"/><circle cx="50" cy="169" r="3.5" fill="#222"/>
<path d="M43 184 Q42 170 57 167 L74 159 Q98 156 112 163 Q123 167 123 184 Z" fill="#c4c7ca"/>
<path d="M66 166 L77 160 Q98 158 108 164 Z" fill="#434a52"/>
<circle cx="59" cy="184" r="5" fill="#222"/><circle cx="107" cy="184" r="5" fill="#222"/>
<rect x="0" y="194" width="200" height="3" fill="#e4c348"/>
<rect x="0" y="201.5" width="200" height="3" fill="#e4c348"/>
<path d="M71 230 L89 215 L89.5 220.5 L98 220.5 L98 238.5 L88 239 L88 244 L81.4 244 Z" fill="#fff" stroke="#333" stroke-width="0.6"/>
<text x="77" y="234" font-size="6" fill="#333">西北</text>
<path d="M141 229 L122 213.4 L121.2 220.5 L113 221 L114 238.2 L124.5 238.5 L125.6 244 L130.5 244 Z" fill="#fff" stroke="#333" stroke-width="0.6"/>
<circle cx="186" cy="14" r="8" fill="#333" opacity="0.6"/><circle cx="185" cy="13" r="3" stroke="#fff" stroke-width="1" fill="none"/><path d="M187 15 L189.5 17.5" stroke="#fff" stroke-width="1"/>
<text x="8" y="17" font-size="6.5" fill="#fff">广东省东莞市南城区第一国际附近</text>
</g>
</svg></div>
</body></html>
